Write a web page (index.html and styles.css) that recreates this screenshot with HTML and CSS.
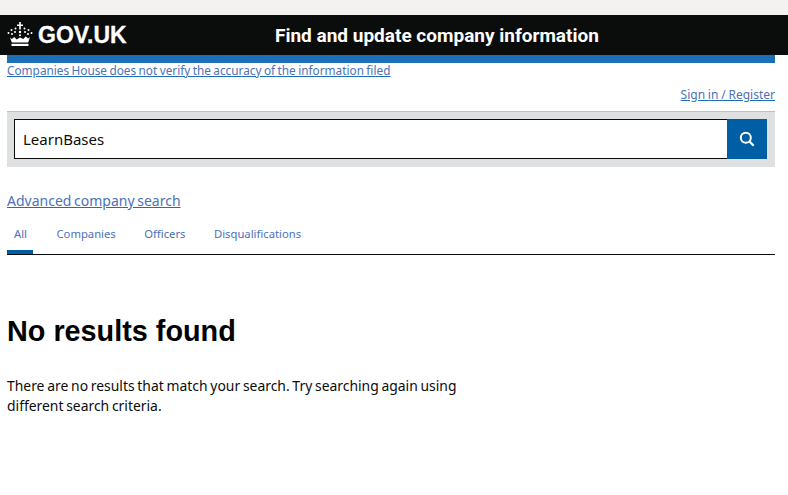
FILE: index.html
```html
<!DOCTYPE html>
<html lang="en">
<head>
<meta charset="utf-8">
<title>No results found</title>
<link rel="stylesheet" href="styles.css">
</head>
<body>
<div class="strip"></div>
<header class="head">
  <a class="logo" href="#">
    <svg class="crown" viewBox="0 0 26 24" width="26" height="24" aria-hidden="true">
      <g fill="#fff">
        <path d="M12.200 0h1.600v2.400H16v1.600h-2.200v3.400h-1.600V4H10V2.400h2.200z"/>
        <circle cx="13" cy="10" r="1.200"/>
        <circle cx="8.500" cy="6.500" r="1"/><circle cx="17.500" cy="6.500" r="1"/>
        <circle cx="4.500" cy="8" r="1"/><circle cx="21.500" cy="8" r="1"/>
        <circle cx="8" cy="10" r="1"/><circle cx="18" cy="10" r="1"/>
        <circle cx="1.500" cy="11" r="1"/><circle cx="24.500" cy="11" r="1"/>
        <circle cx="5" cy="12" r="1"/><circle cx="21" cy="12" r="1"/>
        <circle cx="13" cy="13.200" r="1"/>
        <path d="M3 15.500l1.800 1.500 2.500-2 2.400 2.500L13 15.500l3.300 1.500 2.400-2.500 2.500 2 1.800-1.500-1.800 5.500H4.800z"/>
        <path d="M4.500 21.800h17V24h-17z"/>
      </g>
    </svg>
    <span class="logo-text">GOV.UK</span>
  </a>
  <a class="service" href="#">Find and update company information</a>
</header>
<div class="page">
  <div class="bar"></div>
  <p class="notice"><a href="#">Companies House does not verify the accuracy of the information filed</a></p>
  <p class="sign"><a href="#">Sign in / Register</a></p>
  <form class="search">
    <input class="field" type="text" value="LearnBases" aria-label="Search">
    <button class="go" type="button" aria-label="Search">
      <svg viewBox="0 0 16 16" width="16" height="16" aria-hidden="true">
        <circle cx="6.800" cy="6.800" r="5" fill="none" stroke="#fff" stroke-width="2"/>
        <path d="M10.500 10.500l4.200 4.200" stroke="#fff" stroke-width="2.200" fill="none"/>
      </svg>
    </button>
  </form>
  <p class="advanced"><a href="#">Advanced company search</a></p>
  <nav class="tabs">
    <a class="tab active" href="#">All</a>
    <a class="tab" href="#">Companies</a>
    <a class="tab" href="#">Officers</a>
    <a class="tab" href="#">Disqualifications</a>
  </nav>
  <h1 class="title">No results found</h1>
  <p class="body">There are no results that match your search. Try searching again using different search criteria.</p>
</div>
</body>
</html>
```
FILE: styles.css
```css
* { box-sizing: border-box; }
html, body { margin: 0; padding: 0; background: #fff; }
body { font-family: "Noto Sans", "Open Sans", sans-serif; color: #0b0c0c; height: 495px; overflow: hidden; }
a { color: #4c72b8; text-decoration: underline; text-decoration-color: #1d70b8; }
p { margin: 0; }

.strip { height: 15px; background: #f3f2f1; }
.head { height: 40px; background: #0b0c0c; display: flex; align-items: center; padding-left: 7px; }
.logo { display: flex; align-items: center; gap: 5px; color: #fff; text-decoration: none; width: 268px; }
.crown { flex: none; margin-top: -2px; }
.logo-text { font-family: "Liberation Sans", Arial, sans-serif; font-weight: 700; font-size: 23px; line-height: 30px; -webkit-text-stroke: 0.3px #fff; }
.service { color: #fff; text-decoration: none; font-family: "Roboto", sans-serif; font-weight: 700; font-size: 19px; line-height: 24px; margin-top: 1px; }

.page { padding: 0 13px 0 7px; }
.bar { height: 8px; background: #1d70b8; }
.notice { font-size: 11.8px; word-spacing: -0.65px; line-height: 15px; }
.sign { font-size: 12px; word-spacing: -0.3px; line-height: 16px; text-align: right; margin-top: 9px; }
.search { margin-top: 8px; height: 56px; background: #dee0e2; border-top: 1px solid #bfc1c3; padding: 7px 8px 8px 7px; display: flex; }
.field { flex: 1; min-width: 0; height: 40px; border: 1px solid #0b0c0c; border-right: 0; padding: 0 8px; font-family: "Noto Sans", sans-serif; font-size: 15px; color: #0b0c0c; background: #fff; border-radius: 0; outline: 0; }
.go { flex: none; width: 40px; height: 40px; border: 0; padding: 0; background: #005ea5; display: flex; align-items: center; justify-content: center; }
.advanced { font-size: 14px; word-spacing: -1px; line-height: 20px; margin-top: 24px; }
.tabs { display: flex; height: 41px; margin-top: 3px; border-bottom: 1px solid #0b0c0c; }
.tab { font-size: 11.25px; line-height: 16px; padding: 12px 14px 0; margin-right: 0.5px; text-decoration: none; }
.tab.active { border-bottom: 4px solid #005ea5; padding: 12px 7px 0; margin-right: 9.5px; height: 40px; width: 26px; }
.title { font-family: "Liberation Sans", Arial, sans-serif; font-weight: 700; font-size: 28.8px; line-height: 34px; margin: 59px 0 0; color: #000; }
.body { font-size: 13.9px; word-spacing: -0.85px; line-height: 20px; margin-top: 28px; max-width: 460px; }
```
